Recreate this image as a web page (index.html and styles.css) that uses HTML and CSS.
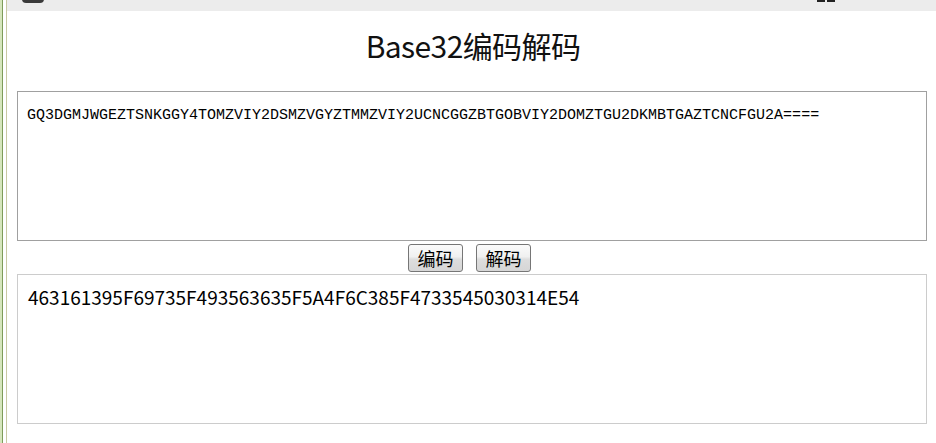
FILE: index.html
```html
<!DOCTYPE html>
<html lang="zh-CN">
<head>
<meta charset="utf-8">
<title>Base32编码解码</title>
<link rel="stylesheet" href="styles.css">
</head>
<body>
<div class="frame">
  <div class="edge"></div>
  <div class="main">
    <div class="topbar">
      <span class="tb-icon-left"></span>
      <span class="tb-icon-right"><i></i><i></i></span>
    </div>
    <div class="content">
      <h1 class="title">Base32编码解码</h1>
      <textarea class="box box-input" spellcheck="false">GQ3DGMJWGEZTSNKGGY4TOMZVIY2DSMZVGYZTMMZVIY2UCNCGGZBTGOBVIY2DOMZTGU2DKMBTGAZTCNCFGU2A====</textarea>
      <div class="actions">
        <button class="btn" type="button">编码</button>
        <button class="btn" type="button">解码</button>
      </div>
      <textarea class="box box-output" spellcheck="false">463161395F69735F493563635F5A4F6C385F4733545030314E54</textarea>
    </div>
  </div>
</div>
</body>
</html>
```
FILE: styles.css
```css
html, body {
  margin: 0;
  padding: 0;
  background: #ffffff;
  height: 100%;
  overflow: hidden;
}

.frame {
  display: flex;
  min-height: 443px;
}

.edge {
  width: 7px;
  flex: 0 0 7px;
  background: linear-gradient(to right, #d6e6bd 0, #d6e6bd 2px, #7e9c5a 2px, #7e9c5a 3px, #ffffff 3px, #ffffff 6px, #c9c9a4 6px, #c9c9a4 7px);
}

.main {
  flex: 1;
  display: flex;
  flex-direction: column;
}

.topbar {
  height: 11px;
  background: #ececec;
  position: relative;
  flex: 0 0 11px;
}

.tb-icon-left {
  position: absolute;
  left: 15px;
  top: -6px;
  width: 22px;
  height: 9px;
  border-radius: 4px;
  background: #3a3a3a;
}

.tb-icon-right {
  position: absolute;
  left: 810px;
  top: 0;
  display: flex;
  gap: 2px;
}

.tb-icon-right i {
  display: block;
  width: 8px;
  height: 2px;
  background: #222;
}

.content {
  padding: 0 9px 0 10px;
  display: flex;
  flex-direction: column;
}

.title {
  margin: 0;
  box-sizing: border-box;
  height: 80px;
  display: flex;
  align-items: center;
  justify-content: center;
  font-family: "Noto Sans CJK SC", "Noto Sans", sans-serif;
  font-weight: 400;
  font-size: 30px;
  color: #111;
  letter-spacing: -0.6px;
  padding-left: 2px;
  padding-bottom: 12px;
}

.box {
  display: block;
  box-sizing: border-box;
  width: 100%;
  height: 150px;
  margin: 0;
  resize: none;
  outline: none;
  background: #fff;
  color: #000;
}

.box-input {
  border: 1px solid #a0a0a0;
  padding: 15px 9px 0;
  font-family: "Liberation Mono", "DejaVu Sans Mono", monospace;
  font-size: 15px;
  line-height: 17px;
}

.box-output {
  border: 1px solid #cccccc;
  padding: 10px 10px 0;
  font-family: "Noto Sans CJK SC", "Noto Sans", sans-serif;
  font-size: 19px;
  line-height: 24px;
}

.actions {
  height: 33px;
  display: flex;
  align-items: center;
  justify-content: center;
  gap: 13px;
  padding-right: 5px;
}

.btn {
  box-sizing: border-box;
  width: 55px;
  height: 28px;
  margin-top: 1px;
  padding: 0;
  border: 1px solid #767676;
  border-radius: 3px;
  background: linear-gradient(to bottom, #fbfbfb 0%, #f0f0f0 45%, #dddddd 55%, #d6d6d6 100%);
  font-family: "Noto Sans CJK SC", sans-serif;
  font-size: 18px;
  line-height: 26px;
  color: #000;
}
```
